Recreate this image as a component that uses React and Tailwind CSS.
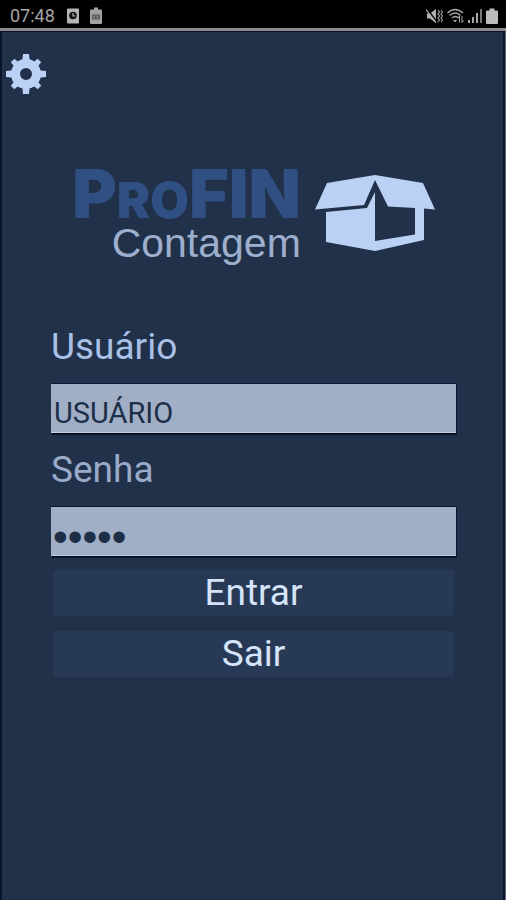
import { useState } from 'react';

function StatusBar() {
  return (
    <header className="flex h-[31px] items-center justify-between border-b-[3px] border-[#8b8b8b] bg-black pl-[10px] pr-2 pt-[3px] text-[#a6a6a6]">
      <div className="flex items-center">
        <span className="w-[46px] text-lg leading-6">07:48</span>
        <svg className="ml-[11px] h-4 w-3" viewBox="0 0 12 16">
          <rect width="12" height="15" y="0.5" rx="1" fill="#b4b4b4" />
          <circle cx="6" cy="7.5" r="3.8" fill="#111" />
          <path d="M6 5v3h2.4" fill="none" stroke="#b4b4b4" strokeWidth="1.2" />
        </svg>
        <svg className="ml-[11px] h-[18px] w-3" viewBox="0 0 12 18">
          <path d="M1 2.5h3V0.5h4v2h3a1 1 0 0 1 1 1V16a1 1 0 0 1-1 1H1a1 1 0 0 1-1-1V3.5a1 1 0 0 1 1-1z" fill="#a2a2a2" />
          <path d="M2 7.5h8v5H2z" fill="#555" />
          <path d="M3 8.5l2 3M5 8.5l-2 3M6.5 8.5l2 3M8.5 8.5l-2 3" stroke="#999" strokeWidth="0.8" />
        </svg>
      </div>
      <div className="flex items-center gap-1">
        <svg className="h-4 w-[17px]" viewBox="0 0 17 16">
          <path d="M1 5.5h3L10 1v14L4 10.5H1z" fill="#b0b0b0" />
          <path d="M1 1l10 13" stroke="#000" strokeWidth="1.6" />
          <path d="M0 1.5l10 13" stroke="#b0b0b0" strokeWidth="1.2" />
          <path d="M12 2l1.5 2-1.5 2 1.5 2-1.5 2 1.5 2-1.5 2M15 2l1.5 2-1.5 2 1.5 2-1.5 2 1.5 2-1.5 2" fill="none" stroke="#a0a0a0" strokeWidth="1.2" />
        </svg>
        <svg className="h-4 w-[17px]" viewBox="0 0 17 16" fill="none" stroke="#a8a8a8" strokeWidth="1.3">
          <path d="M0.5 5q7.5-7 15.5 0M2.5 7.5q6-5 11 0M5 10q3.5-3 6.5 0" />
          <path d="M6 12h4l-2 2.5z" fill="#a8a8a8" stroke="none" />
          <path d="M12.5 14.5V8l-1.5 2M15 8v6.5l1.5-2" strokeWidth="1" />
        </svg>
        <svg className="h-4 w-[14px]" viewBox="0 0 14 16">
          <path d="M0 12h2v3H0zM4 9h2v6H4zM8 5h2v10H8z" fill="#a8a8a8" />
          <path d="M12 1h2v14h-2z" fill="#777" />
        </svg>
        <svg className="h-4 w-3" viewBox="0 0 12 16">
          <path d="M1 2.5h2.5V0.5h5v2H11a1 1 0 0 1 1 1V15a1 1 0 0 1-1 1H1a1 1 0 0 1-1-1V3.5a1 1 0 0 1 1-1z" fill="#bdbdbd" />
        </svg>
      </div>
    </header>
  );
}

function GearIcon() {
  return (
    <svg className="h-10 w-10" viewBox="0 0 40 40">
      <g fill="#bad0f5">
        <path d="M17 0h6l1 10h-8zM17 40h6l1-10h-8zM0 17v6l10 1v-8zM40 17v6l-10 1v-8z" />
        <g transform="rotate(45 20 20)">
          <path d="M17.5 1h5l1 10h-7zM17.5 39h5l1-10h-7zM1 17.5v5l10 1v-7zM39 17.5v5l-10 1v-7z" />
        </g>
      </g>
      <circle cx="20" cy="20" r="10.5" fill="none" stroke="#bad0f5" strokeWidth="9" />
    </svg>
  );
}

function BoxIcon() {
  return (
    <svg className="h-[76px] w-[120px]" viewBox="0 0 120 76" fill="#bad0f5">
      <path d="M12 8L60 0l48 8 12 26.5-11-1V65L60 76 11 67V37l41-4 8-16V66l40-6.500V33l-27-1.500L60 5 49 30 0 34.500z" />
    </svg>
  );
}

function Field({ id, label, labelClass, inputClass, ...props }) {
  return (
    <>
      <label htmlFor={id} className={`block text-[37px] leading-[72px] ${labelClass}`}>{label}</label>
      <input
        id={id}
        className={`block h-[51px] w-full border-y border-t-[#0b1638] border-b-[#050b1c] bg-[#a0afc6] pt-[9px] text-[#1d2e47] shadow-[inset_0_-1px_0_#c3d0de,1px_1px_0_#0b1638] outline-none ${inputClass}`}
        {...props}
      />
    </>
  );
}

export default function App() {
  const [user, setUser] = useState('USUÁRIO');
  const [password, setPassword] = useState('12345');

  return (
    <div className="flex min-h-screen flex-col bg-[#213149] font-[Roboto,sans-serif]">
      <StatusBar />
      <main className="flex-1 border-l-2 border-r border-l-[#0a142b] border-r-[#5d6675] pt-[23px] shadow-[inset_-2px_1px_0_#0a142b]">
        <button type="button" aria-label="Configurações" className="ml-1 block">
          <GearIcon />
        </button>

        <div className="mt-[72px] flex justify-center gap-[14px]">
          <div className="flex flex-col items-end font-[Inter,sans-serif] font-black text-[#304f82]">
            <h1 className="text-[68px] leading-[54px]">
              P<span className="text-[50px] leading-[36px]">RO</span>FIN
            </h1>
            <p className="font-['Liberation_Sans',sans-serif] text-[41px] font-normal leading-[46px] text-[#9dafcd]">Contagem</p>
          </div>
          <div className="pt-[9px]">
            <BoxIcon />
          </div>
        </div>

        <form className="mt-[45px] pl-[49px] pr-[49px]" onSubmit={e => e.preventDefault()}>
          <Field
            id="user"
            label="Usuário"
            labelClass="text-[#a9c0e6]"
            inputClass="pl-[3px] text-[29px]"
            type="text"
            value={user}
            onChange={e => setUser(e.target.value)}
          />
          <Field
            id="password"
            label="Senha"
            labelClass="text-[#99abc9]"
            inputClass="pl-[2px] font-['Liberation_Sans',sans-serif] text-[42px]"
            type="password"
            value={password}
            onChange={e => setPassword(e.target.value)}
          />
          <div className="mt-[13px] flex flex-col gap-[15px] px-[2px] text-[37px] text-[#d5e4fa]">
            <button type="submit" className="h-[46px] rounded bg-[#283956] leading-[46px]">Entrar</button>
            <button type="button" className="h-[46px] rounded bg-[#283956] leading-[46px]">Sair</button>
          </div>
        </form>
      </main>
    </div>
  );
}
